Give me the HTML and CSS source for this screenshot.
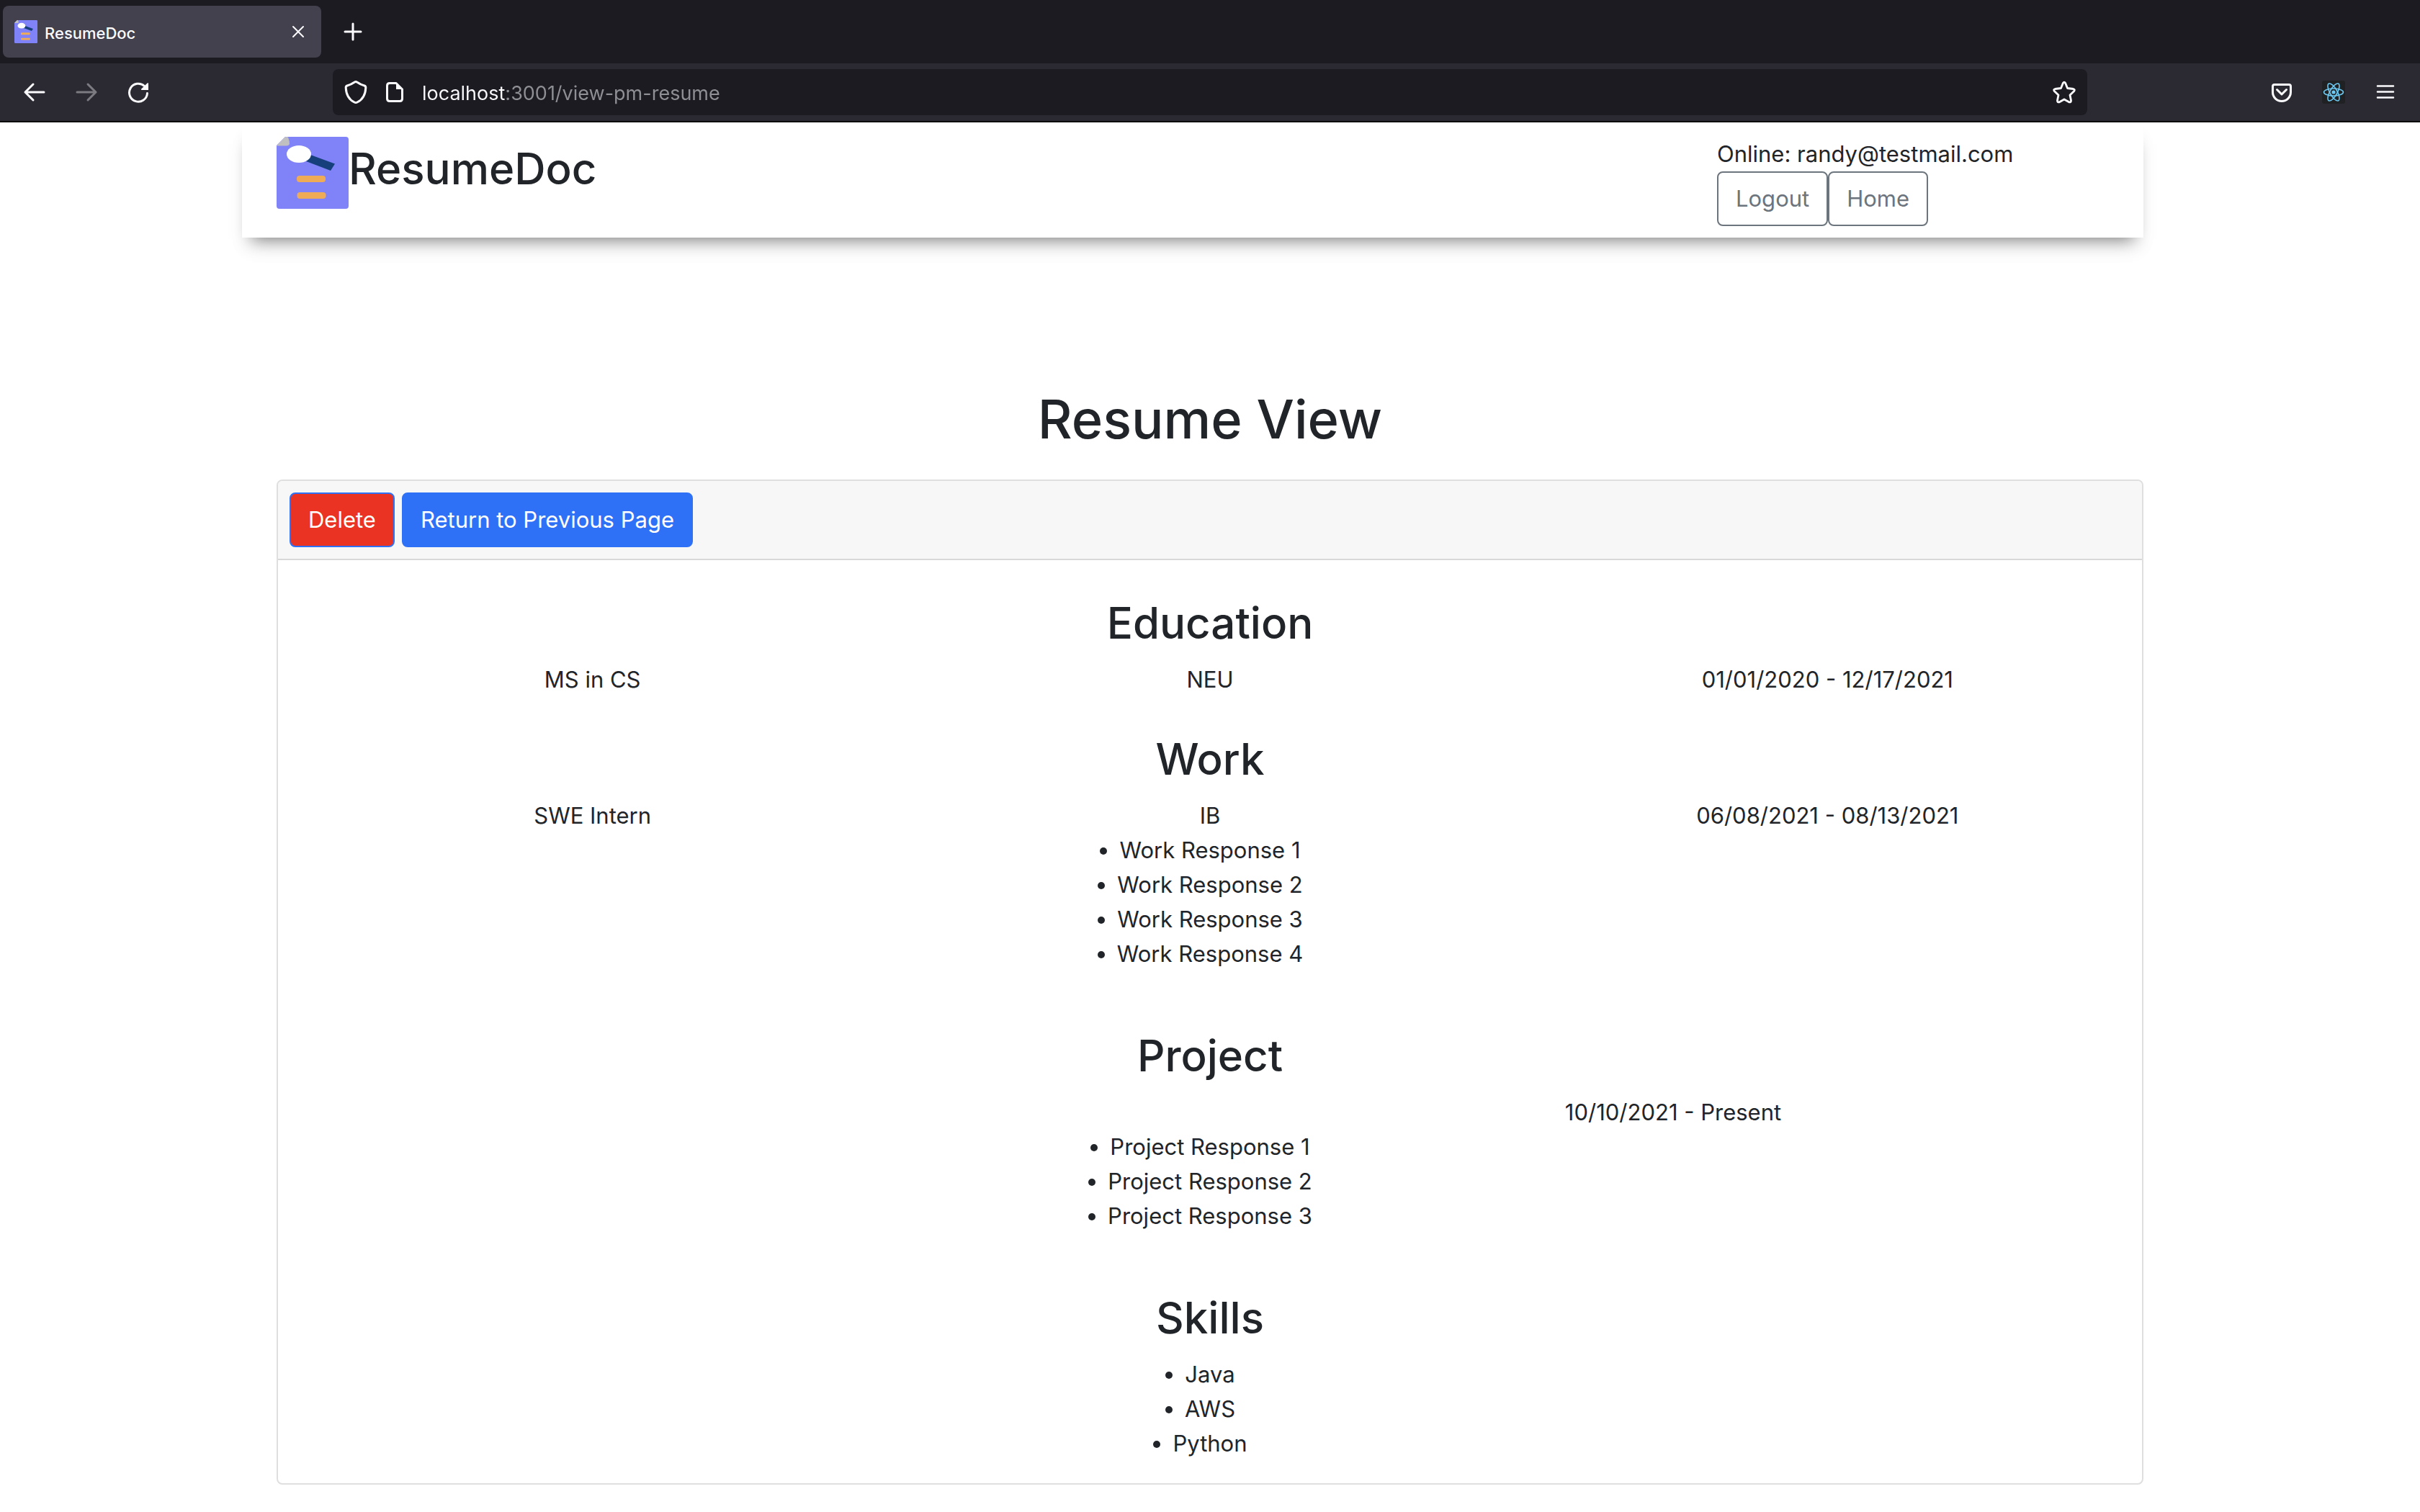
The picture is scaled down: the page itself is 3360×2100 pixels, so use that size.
FILE: index.html
```html
<!DOCTYPE html>
<html lang="en">
<head>
<meta charset="utf-8">
<title>ResumeDoc</title>
<link rel="stylesheet" href="styles.css">
</head>
<body>
<svg class="sprite" aria-hidden="true">
  <symbol id="logo" viewBox="0 0 100 100" preserveAspectRatio="none">
    <path fill="#8083f8" d="M12 0H96Q100 0 100 4V96Q100 100 96 100H4Q0 100 0 96V12Z"/>
    <path fill="#c0c0c0" d="M0 12.500L11 1Q13-.5 16 .5Q18 6 18 10Q17 12.500 13 12.500Z"/>
    <path fill="#16407c" d="M47 25L81 37.500L75 47L41 34Z"/>
    <ellipse cx="31" cy="24" rx="17" ry="12" fill="#fff"/>
    <rect x="28" y="54" width="40" height="9" rx="4" fill="#efab56"/>
    <rect x="28.500" y="77" width="40" height="9" rx="4" fill="#efab56"/>
  </symbol>
</svg>

<header class="browser">
  <div class="tab-strip">
    <div class="tab">
      <svg class="favicon" aria-hidden="true"><use href="#logo"/></svg>
      <span class="tab-title">ResumeDoc</span>
      <button class="tab-close" aria-label="Close tab">
        <svg class="icon" viewBox="0 0 32 32"><path d="M9 9L23 23M23 9L9 23" stroke-width="2"/></svg>
      </button>
    </div>
    <button class="new-tab" aria-label="New tab">
      <svg class="icon" viewBox="0 0 32 32"><path d="M16 5V27M5 16H27" stroke-width="3"/></svg>
    </button>
  </div>

  <nav class="toolbar" aria-label="Browser toolbar">
    <div class="tools">
      <button class="tool" aria-label="Back">
        <svg class="icon" viewBox="0 0 32 32"><path d="M29 16H3M14 5L3 16L14 27" stroke-width="3"/></svg>
      </button>
      <button class="tool" aria-label="Forward" disabled>
        <svg class="icon" viewBox="0 0 32 32"><path d="M3 16H29M18 5L29 16L18 27" stroke-width="3"/></svg>
      </button>
      <button class="tool" aria-label="Reload">
        <svg class="icon" viewBox="0 0 32 32"><path d="M28.500 17.500A12.500 12.500 0 1 1 24.500 7.500" stroke-width="3"/><path class="solid" d="M30 3.500V13H20.500Q19.500 12.500 20.300 11.500L28.500 3.500Q29.500 2.800 30 3.500Z"/></svg>
      </button>
    </div>

    <div class="address">
      <svg class="icon" viewBox="0 0 32 32" aria-hidden="true"><path d="M16 1.500Q17 1.500 18 2.300Q22.500 5.500 28 7Q30 7.600 29.800 10Q29.200 24.500 18 30Q16 31 14 30Q2.800 24.500 2.200 10Q2 7.600 4 7Q9.500 5.500 14 2.300Q15 1.500 16 1.500Z" stroke-width="3"/></svg>
      <svg class="icon" viewBox="0 0 32 32" aria-hidden="true"><path d="M18 3.500H9Q5.500 3.500 5.500 7V25Q5.500 28.500 9 28.500H23Q26.500 28.500 26.500 25V12Z" stroke-width="3"/><path class="solid" d="M18 3L27 12H18Z"/></svg>
      <input class="url" type="text" aria-label="Address" value="localhost:3001/view-pm-resume">
      <button class="bookmark" aria-label="Bookmark this page">
        <svg class="icon" viewBox="0 0 32 32"><path d="M14.300 3.500Q16 .8 17.700 3.500L20.500 10.500L28.500 11.500Q31.500 12.300 29.500 14.800L24 20L25.500 27.500Q25.600 30.600 22.700 29.800L16 26L9.300 29.800Q6.400 30.600 6.500 27.500L8 20L2.500 14.800Q.5 12.300 3.500 11.500L11.500 10.500Z" stroke-width="2.800"/></svg>
      </button>
    </div>

    <div class="tools">
      <button class="tool" aria-label="Save to Pocket">
        <svg class="icon" viewBox="0 0 32 32"><path d="M6 5.500H26Q28.500 5.500 28.500 8V16A12.500 12.500 0 0 1 3.500 16V8Q3.500 5.500 6 5.500ZM9.500 12.500L16 19L22.500 12.500" stroke-width="3"/></svg>
      </button>
      <button class="tool" aria-label="React Developer Tools">
        <svg class="icon react" viewBox="0 0 32 32"><rect width="32" height="32" rx="3"/><g stroke-width="1.600"><ellipse cx="16" cy="16" rx="13.500" ry="5"/><ellipse cx="16" cy="16" rx="13.500" ry="5" transform="rotate(60 16 16)"/><ellipse cx="16" cy="16" rx="13.500" ry="5" transform="rotate(120 16 16)"/></g><circle cx="16" cy="16" r="2.600"/></svg>
      </button>
      <button class="tool" aria-label="Open application menu">
        <svg class="icon" viewBox="0 0 32 32"><path d="M5 7.500H27M5 15.500H27M5 23.500H27" stroke-width="2.500"/></svg>
      </button>
    </div>
  </nav>
</header>

<div class="container">
  <header class="site-header">
    <div class="brand">
      <svg class="logo" role="img" aria-label="ResumeDoc logo"><use href="#logo"/></svg>
      <h2 class="brand-name">ResumeDoc</h2>
    </div>
    <div class="account">
      <div>Online: randy@testmail.com</div>
      <div class="account-actions">
        <button class="btn btn-outline">Logout</button>
        <button class="btn btn-outline">Home</button>
      </div>
    </div>
  </header>

  <main class="content">
    <h1 class="page-title">Resume View</h1>
    <article class="card">
      <div class="card-header">
        <button class="btn btn-delete">Delete</button>
        <button class="btn btn-primary">Return to Previous Page</button>
      </div>
      <div class="card-body">
        <section>
          <h2>Education</h2>
          <div class="row">
            <div>MS in CS</div>
            <div>NEU</div>
            <div>01/01/2020 - 12/17/2021</div>
          </div>
        </section>
        <section>
          <h2>Work</h2>
          <div class="row">
            <div>SWE Intern</div>
            <div>IB</div>
            <div>06/08/2021 - 08/13/2021</div>
          </div>
          <ul>
            <li>Work Response 1</li>
            <li>Work Response 2</li>
            <li>Work Response 3</li>
            <li>Work Response 4</li>
          </ul>
        </section>
        <section>
          <h2>Project</h2>
          <div class="row">
            <div></div>
            <div>10/10/2021 - Present</div>
          </div>
          <ul>
            <li>Project Response 1</li>
            <li>Project Response 2</li>
            <li>Project Response 3</li>
          </ul>
        </section>
        <section>
          <h2>Skills</h2>
          <ul>
            <li>Java</li>
            <li>AWS</li>
            <li>Python</li>
          </ul>
        </section>
      </div>
    </article>
  </main>
</div>
</body>
</html>
```
FILE: styles.css
```css
* {
  box-sizing: border-box;
}

body {
  margin: 0;
  background: #fff;
  color: #212529;
  font-family: Inter, "Liberation Sans", sans-serif;
  font-size: 31px;
  line-height: 48px;
}

h1,
h2,
ul {
  margin: 0;
  padding: 0;
}

h1,
h2 {
  font-weight: 500;
}

h2 {
  font-size: 60px;
  line-height: 77px;
}

button {
  margin: 0;
  padding: 0;
  border: 0;
  background: none;
  color: inherit;
  font: inherit;
}

.sprite {
  position: absolute;
  width: 0;
  height: 0;
}

/* Browser window */

.browser {
  background: #2b2a33;
  border-bottom: 2px solid #0c0c0d;
  color: #fbfbfe;
}

.icon {
  display: block;
  flex: none;
  width: 32px;
  height: 32px;
  fill: none;
  stroke: currentColor;
  stroke-linecap: round;
  stroke-linejoin: round;
}

.icon .solid {
  fill: currentColor;
  stroke: none;
}

.tab-strip {
  display: flex;
  align-items: center;
  gap: 12px;
  height: 88px;
  padding: 0 4px;
  background: #1c1b22;
}

.tab {
  display: flex;
  align-items: center;
  width: 442px;
  height: 72px;
  padding: 0 16px;
  border-radius: 8px;
  background: #42414d;
  font-size: 22px;
}

.favicon {
  flex: none;
  width: 32px;
  height: 32px;
  margin-right: 10px;
}

.tab-title {
  flex: 1;
  padding-top: 3px;
  font-weight: 500;
}

.new-tab {
  display: grid;
  place-items: center;
  width: 64px;
  height: 64px;
}

.toolbar {
  display: flex;
  align-items: center;
  gap: 238px;
  height: 80px;
  padding: 0 16px;
}

.tools {
  display: flex;
  gap: 8px;
}

.tool {
  display: grid;
  place-items: center;
  width: 64px;
  height: 64px;
}

.tool:disabled {
  color: #7c7b81;
}

.react rect {
  fill: #202123;
  stroke: none;
}

.react g {
  stroke: #6cc8f0;
}

.react circle {
  fill: #6cc8f0;
  stroke: none;
}

.address {
  display: flex;
  flex: 1;
  align-items: center;
  gap: 22px;
  height: 64px;
  padding: 0 16px;
  border-radius: 8px;
  background: #1c1b22;
}

.url {
  flex: 1;
  min-width: 0;
  height: 48px;
  margin: 0;
  padding: 3px 0 0;
  border: 0;
  outline: 0;
  background: linear-gradient(to right, #fbfbfe 116px, #8f8f96 116px);
  background-clip: text;
  -webkit-background-clip: text;
  color: transparent;
  font: inherit;
  font-size: 27px;
}

/* Page */

.container {
  max-width: 2592px;
  margin: 0 auto;
}

.site-header {
  display: flex;
  margin-left: -48px;
  padding: 20px 24px 16px 48px;
  background: #fff;
  box-shadow: 0 16px 22px -14px rgba(0, 0, 0, .5), 0 20px 24px -4px rgba(0, 0, 0, .06);
}

.brand {
  display: flex;
  flex: 1;
  height: 100px;
}

.logo {
  flex: none;
  width: 100px;
  height: 100px;
}

.brand-name {
  line-height: 88px;
}

.account {
  flex: none;
  width: 568px;
}

.account-actions {
  display: flex;
}

.btn {
  height: 76px;
  padding: 0 24px;
  border: 2px solid;
  border-radius: 8px;
  line-height: 48px;
}

.btn-outline {
  border-color: #6c757d;
  color: #6c757d;
}

.btn-delete {
  border-color: #2f71f6;
  background: #ea3323;
  color: #fff;
}

.btn-primary {
  border-color: #2f71f6;
  background: #2f71f6;
  color: #fff;
}

.content {
  padding: 204px 0 24px;
  text-align: center;
}

.page-title {
  margin-bottom: 36px;
  font-size: 74px;
  line-height: 96px;
}

.card {
  border: 2px solid #dfdfdf;
  border-radius: 8px;
}

.card-header {
  display: flex;
  gap: 10px;
  padding: 16px;
  border-bottom: 2px solid #d8d8d8;
  border-radius: 6px 6px 0 0;
  background: #f7f7f7;
}

.card-body {
  display: flex;
  flex-direction: column;
  gap: 48px;
  padding: 49px 8px 0;
}

.card-body h2 {
  margin-bottom: 16px;
}

.row {
  display: flex;
}

.row > div {
  flex: 1;
}

.card-body ul {
  margin-bottom: 31px;
}

.card-body li {
  width: fit-content;
  margin: 0 auto;
}
```
